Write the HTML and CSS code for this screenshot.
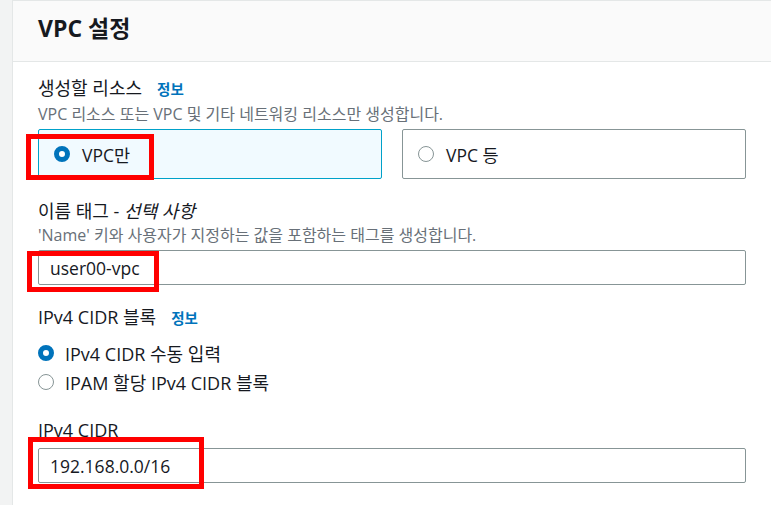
FILE: index.html
```html
<!DOCTYPE html>
<html lang="ko">
<head>
<meta charset="utf-8">
<link rel="stylesheet" href="styles.css">
</head>
<body>
<div class="page">
  <section class="card">
    <header class="card-header"><h2 class="title">VPC 설정</h2></header>
    <div class="card-body">
      <div class="field">
        <div class="label">생성할 리소스<a class="info">정보</a></div>
        <div class="desc">VPC 리소스 또는 VPC 및 기타 네트워킹 리소스만 생성합니다.</div>
        <div class="tiles">
          <div class="tile selected">
            <span class="radio on"></span><span class="tile-text">VPC만</span>
            <span class="mark mark-tile"></span>
          </div>
          <div class="tile">
            <span class="radio"></span><span class="tile-text">VPC 등</span>
          </div>
        </div>
      </div>
      <div class="field">
        <div class="label">이름 태그 - <i>선택 사항</i></div>
        <div class="desc">'Name' 키와 사용자가 지정하는 값을 포함하는 태그를 생성합니다.</div>
        <div class="input-wrap">
          <div class="input">user00-vpc</div>
          <span class="mark mark-name"></span>
        </div>
      </div>
      <div class="field">
        <div class="label">IPv4 CIDR 블록<a class="info">정보</a></div>
        <div class="options">
          <div class="option"><span class="radio on"></span>IPv4 CIDR 수동 입력</div>
          <div class="option"><span class="radio"></span>IPAM 할당 IPv4 CIDR 블록</div>
        </div>
      </div>
      <div class="field">
        <div class="label">IPv4 CIDR</div>
        <div class="input-wrap spaced">
          <div class="input">192.168.0.0/16</div>
          <span class="mark mark-cidr"></span>
        </div>
      </div>
    </div>
  </section>
</div>
</body>
</html>
```

FILE: styles.css
```css
* { box-sizing: border-box; }
html, body { margin: 0; padding: 0; }
body {
  background: #f2f3f3;
  font-family: "Open Sans", "Noto Sans CJK KR", sans-serif;
  color: #16191f;
  overflow: hidden;
  width: 771px;
  height: 505px;
}
.page { padding-left: 12px; height: 505px; }
.card {
  width: 759px;
  height: 505px;
  background: #ffffff;
  border: 1px solid #e4e7e7;
  border-right: none;
  border-bottom: none;
}
.card-header {
  background: #fafafa;
  border-bottom: 1px solid #e4e7e7;
  height: 61px;
  padding: 12px 25px 0;
}
.title {
  margin: 0;
  font-size: 23px;
  line-height: 30px;
  font-weight: 700;
  color: #16191f;
}
.card-body { padding: 13px 25px 0; }
.field { margin-bottom: 19px; }
.label {
  font-size: 18px;
  line-height: 26px;
  color: #16191f;
}
.label i { font-style: italic; }
.info {
  color: #0073bb;
  font-size: 14.5px;
  font-weight: 700;
  margin-left: 15px;
}
.desc {
  font-size: 16px;
  line-height: 22px;
  color: #687078;
}
.tiles {
  display: grid;
  grid-template-columns: 1fr 1fr;
  column-gap: 20px;
  margin-top: 4px;
}
.tile {
  position: relative;
  height: 50px;
  border: 1px solid #879596;
  border-radius: 2px;
  display: flex;
  align-items: center;
  padding-left: 15px;
  font-size: 17.5px;
}
.tile.selected {
  border-color: #00a1c9;
  background: #f1faff;
}
.radio {
  width: 16px;
  height: 16px;
  border-radius: 50%;
  border: 1.5px solid #879596;
  background: #fff;
  display: inline-block;
  margin-right: 12px;
  flex: none;
}
.radio.on {
  border: 5px solid #0073bb;
}
.input-wrap { position: relative; margin-top: 4px; }
.input-wrap.spaced { margin-top: 5px; }
.input {
  height: 35px;
  border: 1px solid #879596;
  border-radius: 2px;
  padding-left: 11px;
  font-size: 17.5px;
  display: flex;
  align-items: center;
}
.options { margin-top: 6px; padding-bottom: 2px; }
.option {
  display: flex;
  align-items: center;
  font-size: 18px;
  height: 29px;
}
.option .radio { margin-right: 11px; }
.mark {
  position: absolute;
  border: 5px solid #ff0000;
  pointer-events: none;
}
.mark-tile { left: -13px; top: 4px; width: 128px; height: 46px; }
.mark-name { left: -11px; top: 1px; width: 132px; height: 41px; }
.mark-cidr { left: -10px; top: -11px; width: 176px; height: 52px; }
```
